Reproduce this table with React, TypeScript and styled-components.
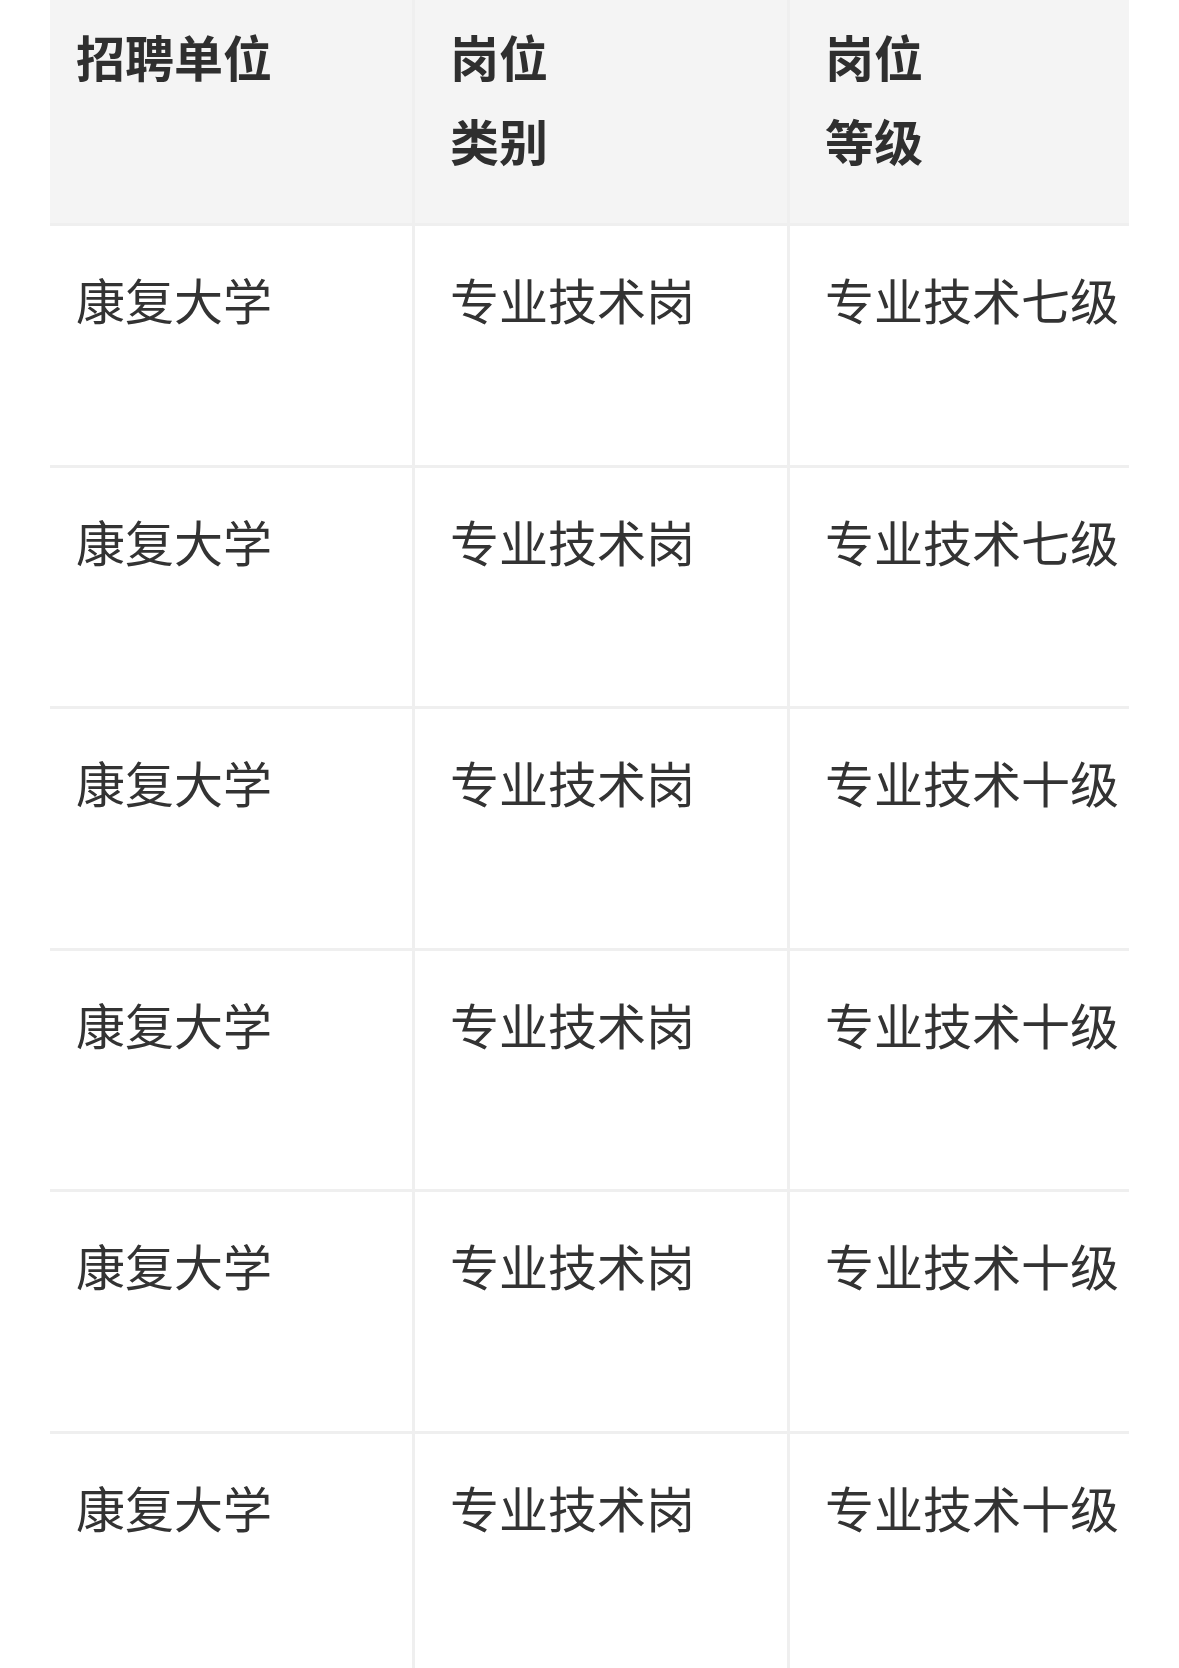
import React from "react";
import styled, { createGlobalStyle } from "styled-components";

const Global = createGlobalStyle`
  html, body { margin: 0; padding: 0; background: #ffffff; }
  body {
    font-family: "Noto Sans CJK SC", "Noto Sans", sans-serif;
    color: #333333;
  }
`;

const Page = styled.div`
  padding-left: 50px;
  height: 1668px;
  overflow: hidden;
`;

const Scroller = styled.div`
  width: 1079px;
  overflow: hidden;
`;

const Row = styled.div<{ $head?: boolean }>`
  display: grid;
  grid-template-columns: 362px 375px 420px;
  width: 1157px;
  height: ${(p) => (p.$head ? "226px" : "241.5px")};
  box-sizing: border-box;
  border-bottom: 3px solid #efefef;
  background: ${(p) => (p.$head ? "#f4f4f4" : "#ffffff")};
`;

const Cell = styled.div<{ $first?: boolean; $head?: boolean }>`
  box-sizing: border-box;
  border-left: ${(p) => (p.$first ? "none" : "3px solid #efefef")};
  padding: ${(p) => (p.$head ? "14px" : "31px")} 0 0
    ${(p) => (p.$first ? "26px" : "35px")};
  font-size: 49px;
  line-height: 84px;
  font-weight: ${(p) => (p.$head ? 700 : 400)};
  color: ${(p) => (p.$head ? "#2f2f2f" : "#333333")};
  white-space: nowrap;
`;

const rows = [
  ["康复大学", "专业技术岗", "专业技术七级"],
  ["康复大学", "专业技术岗", "专业技术七级"],
  ["康复大学", "专业技术岗", "专业技术十级"],
  ["康复大学", "专业技术岗", "专业技术十级"],
  ["康复大学", "专业技术岗", "专业技术十级"],
  ["康复大学", "专业技术岗", "专业技术十级"],
];

export default function App() {
  return (
    <Page>
      <Global />
      <Scroller>
        <Row $head>
          <Cell $head $first>招聘单位</Cell>
          <Cell $head>
            岗位
            <br />
            类别
          </Cell>
          <Cell $head>
            岗位
            <br />
            等级
          </Cell>
        </Row>
        {rows.map((r, i) => (
          <Row key={i}>
            {r.map((t, j) => (
              <Cell key={j} $first={j === 0}>
                {t}
              </Cell>
            ))}
          </Row>
        ))}
      </Scroller>
    </Page>
  );
}
